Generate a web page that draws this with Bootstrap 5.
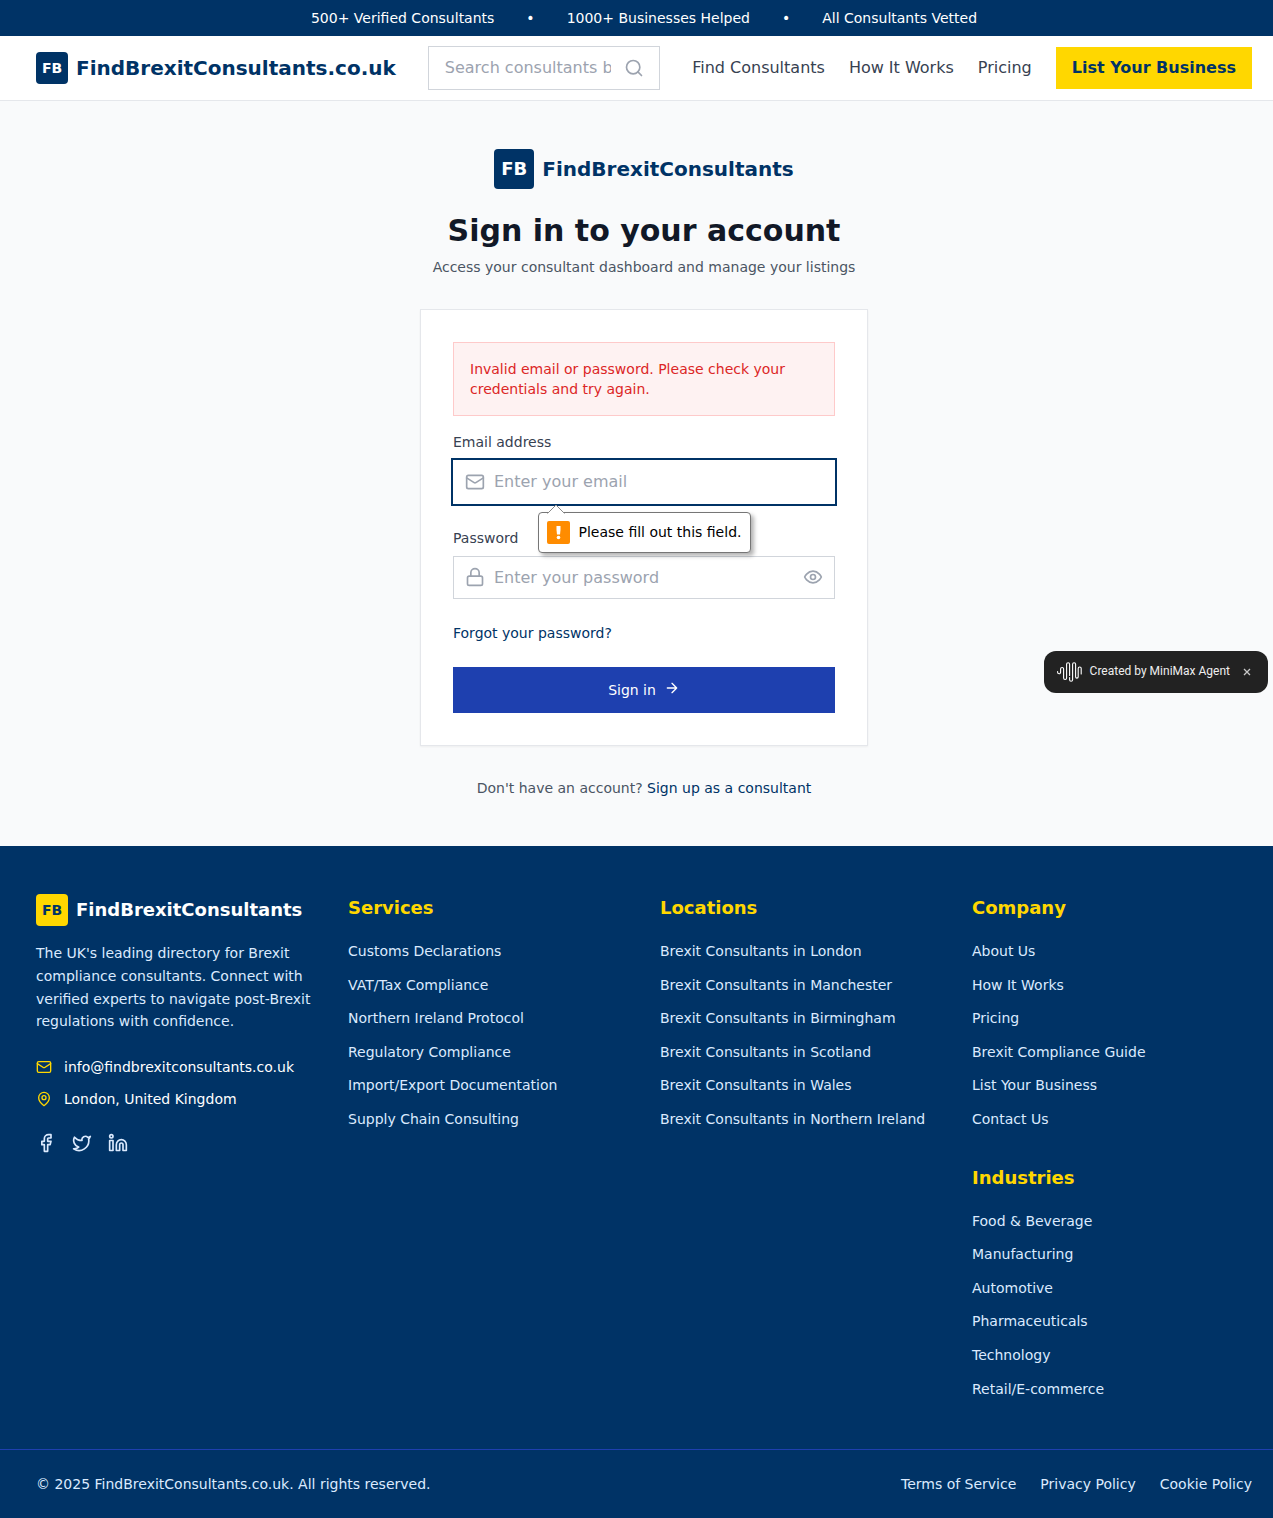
<!DOCTYPE html>
<html lang="en">
<head>
<meta charset="utf-8">
<meta name="viewport" content="width=device-width, initial-scale=1">
<title>Sign in - FindBrexitConsultants.co.uk</title>
<link href="https://cdn.jsdelivr.net/npm/bootstrap@5.3.0/dist/css/bootstrap.min.css" rel="stylesheet">
<style>
  :root { --navy: #003366; --gold: #ffd700; --grey: #9ca3af; }
  body { font-family: "DejaVu Sans", sans-serif; font-size: 16px; line-height: 1.6; color: #374151; background: #f9fafb; overflow-x: hidden; }
  a { text-decoration: none; color: inherit; }
  svg { display: block; flex: none; }
  .icon { fill: none; stroke: currentColor; stroke-width: 2; stroke-linecap: round; stroke-linejoin: round; }
  .shell { padding-left: 36px; padding-right: 21px; }
  .fs-14 { font-size: 14px; line-height: 20px; }
  .navy { color: var(--navy); }
  .slate { color: #4b5563; }
  .bg-navy { background: var(--navy); }
  .top-strip { height: 36px; gap: 32px; }
  .site-head { height: 65px; border-bottom: 1px solid #e5e7eb; }
  .fb-mark { width: 32px; height: 32px; border-radius: 4px; background: var(--navy); color: #fff; font-weight: 700; font-size: 14px; line-height: 20px; flex: none; }
  .fb-mark.big { width: 40px; height: 40px; font-size: 18px; }
  .fb-mark.gold { background: var(--gold); color: var(--navy); }
  .brand-text { font-size: 20px; line-height: 28px; font-weight: 700; }
  .brand-text.foot { font-size: 18px; }
  .field { border: 1px solid #d1d5db; background: #fff; height: 43.5px; }
  .field input { border: 0; outline: 0; background: transparent; min-width: 0; padding: 0; color: #111827; line-height: 24px; font-size: 16px; }
  .field input::placeholder { color: var(--grey); opacity: 1; }
  .field svg { color: var(--grey); }
  .field.active { border-color: transparent; box-shadow: 0 0 0 2px var(--navy); }
  .search { width: 232px; height: 44px; padding: 0 15px 0 16px; margin-left: 32px; margin-right: 32px; }
  .search input { width: 166px; margin-right: 13px; }
  .cta { background: var(--gold); color: var(--navy); font-weight: 700; padding: 8px 16px; }
  .main-area { padding-top: 48px; padding-bottom: 48px; }
  h1 { font-size: 30px; line-height: 36px; font-weight: 700; color: #111827; margin: 24px 0 8px; }
  .login { width: 448px; margin-top: 32px; padding: 32px; background: #fff; border: 1px solid #e5e7eb; box-shadow: 0 1px 2px rgba(0,0,0,.05); }
  .error-note { background: #fef2f2; border: 1px solid #fecaca; color: #dc2626; padding: 16px; margin-bottom: 16px; }
  .login label { display: block; margin-bottom: 8px; }
  .login .field { padding: 0 11px; }
  .login input { margin-left: 1px; }
  #password { padding-top: 1px; }
  .group { margin-bottom: 24px; }
  .submit { height: 46px; background: #1e40af; color: #fff; border: 0; border-radius: 0; margin-top: 24px; }
  .bubble { left: 84px; top: 51px; width: 213px; height: 41px; background: #fff; border: 1px solid #767676; border-radius: 4px; box-shadow: 3px 3px 4px rgba(0,0,0,.3); color: #000; padding: 0 8px; z-index: 3; }
  .bubble .tip { left: 8px; top: -9px; }
  .bubble span { padding-bottom: 2px; padding-left: .5px; }
  .site-foot { color: #dbeafe; padding-top: 48px; }
  .foot-grid { display: grid; grid-template-columns: repeat(4, 280px); gap: 32px; padding-bottom: 48px; }
  .foot-grid h2 { font-size: 18px; line-height: 28px; font-weight: 600; color: var(--gold); margin: 0 0 16px; }
  .foot-grid li { line-height: 25.6px; margin-bottom: 8px; }
  .foot-grid li a { font-size: 14px; line-height: 20px; }
  .foot-grid ul { margin-bottom: 32px; }
  .foot-grid ul:last-child { margin-bottom: -8px; }
  .about { font-size: 14px; line-height: 22.75px; margin: 16px 0 24px; }
  .gold-text { color: var(--gold); }
  .legal { border-top: 1px solid #1e40af; padding-top: 24px; padding-bottom: 23.8px; }
  .agent { position: fixed; left: 1044px; top: 651px; width: 224px; height: 42px; border-radius: 12px; background: #222; color: #eee; font: 12px/18px Roboto, sans-serif; padding: 0 17px 0 13px; z-index: 9; }
  .agent span { padding-bottom: 2px; margin-left: 7.6px; }
</style>
<script src="https://cdn.jsdelivr.net/npm/bootstrap@5.3.0/dist/js/bootstrap.bundle.min.js"></script>
</head>
<body>
<div class="bg-navy text-white shell top-strip fs-14 d-flex align-items-center justify-content-center">
  <span>500+ Verified Consultants</span><span>•</span><span>1000+ Businesses Helped</span><span>•</span><span>All Consultants Vetted</span>
</div>

<header class="site-head bg-white shell d-flex align-items-center">
  <a href="#" class="d-flex align-items-center gap-2 navy">
    <span class="fb-mark d-flex align-items-center justify-content-center">FB</span>
    <span class="brand-text">FindBrexitConsultants.co.uk</span>
  </a>
  <div class="field search d-flex align-items-center">
    <input type="text" placeholder="Search consultants by service or location...">
    <svg class="icon" width="20" height="20" viewBox="0 0 24 24"><circle cx="11" cy="11" r="8"/><path d="m21 21-4.3-4.3"/></svg>
  </div>
  <nav class="d-flex align-items-center gap-4 ms-auto text-nowrap">
    <a href="#">Find Consultants</a><a href="#">How It Works</a><a href="#">Pricing</a>
    <a href="#" class="cta">List Your Business</a>
  </nav>
</header>

<main class="main-area shell d-flex flex-column align-items-center">
  <a href="#" class="d-flex align-items-center gap-2 navy">
    <span class="fb-mark big d-flex align-items-center justify-content-center">FB</span>
    <span class="brand-text">FindBrexitConsultants</span>
  </a>
  <h1>Sign in to your account</h1>
  <p class="fs-14 mb-0 slate">Access your consultant dashboard and manage your listings</p>

  <form class="login" novalidate>
    <div class="error-note fs-14">Invalid email or password. Please check your credentials and try again.</div>
    <div class="group">
      <label class="fs-14" for="email">Email address</label>
      <div class="field active d-flex align-items-center gap-2 position-relative">
        <svg class="icon" width="20" height="20" viewBox="0 0 24 24"><rect width="20" height="16" x="2" y="4" rx="2"/><path d="m22 7-8.970 5.700a1.940 1.940 0 0 1-2.060 0L2 7"/></svg>
        <input id="email" class="flex-grow-1" type="email" placeholder="Enter your email">
        <div class="bubble position-absolute fs-14 d-flex align-items-center gap-2 text-nowrap" role="tooltip">
          <svg class="tip position-absolute" width="18" height="10" viewBox="0 0 18 10"><path d="M0.5 9.500 9 1l8.500 8.500V10H.5Z" fill="#fff"/><path d="M.5 9.500 9 1l8.500 8.500" fill="none" stroke="#8a8a8a"/></svg>
          <svg width="23" height="23" viewBox="0 0 23 23"><rect width="23" height="23" rx="2" fill="#ff8c00"/><path d="M9.500 5h4v4l-.5 4.500h-3L9.500 9Z" fill="#fff"/><circle cx="11.500" cy="16.500" r="1.800" fill="#fff"/></svg>
          <span>Please fill out this field.</span>
        </div>
      </div>
    </div>
    <div class="group">
      <label class="fs-14" for="password">Password</label>
      <div class="field d-flex align-items-center gap-2">
        <svg class="icon" width="20" height="20" viewBox="0 0 24 24"><rect width="18" height="11" x="3" y="11" rx="2"/><path d="M7 11V7a5 5 0 0 1 10 0v4"/></svg>
        <input id="password" class="flex-grow-1" type="password" placeholder="Enter your password">
        <svg class="icon" width="20" height="20" viewBox="0 0 24 24"><path d="M2 12s3-7 10-7 10 7 10 7-3 7-10 7-10-7-10-7Z"/><circle cx="12" cy="12" r="3"/></svg>
      </div>
    </div>
    <a href="#" class="fs-14 navy d-block">Forgot your password?</a>
    <button type="button" class="submit fs-14 w-100 d-flex align-items-center justify-content-center gap-2">
      <span>Sign in</span>
      <svg class="icon mb-1" width="16" height="16" viewBox="0 0 24 24"><path d="M5 12h14M12 5l7 7-7 7"/></svg>
    </button>
  </form>
  <p class="fs-14 mb-0 slate pt-2 mt-4">Don't have an account? <a href="#" class="navy">Sign up as a consultant</a></p>
</main>

<footer class="bg-navy site-foot">
  <div class="foot-grid shell">
    <div>
      <div class="d-flex align-items-center gap-2 text-white">
        <span class="fb-mark gold d-flex align-items-center justify-content-center">FB</span>
        <span class="brand-text foot">FindBrexitConsultants</span>
      </div>
      <p class="about">The UK's leading directory for Brexit compliance consultants. Connect with verified experts to navigate post-Brexit regulations with confidence.</p>
      <div class="d-flex align-items-center fs-14 text-white mb-2 pb-1">
        <svg class="icon gold-text me-2" width="16" height="16" viewBox="0 0 24 24"><rect width="20" height="16" x="2" y="4" rx="2"/><path d="m22 7-8.970 5.700a1.940 1.940 0 0 1-2.060 0L2 7"/></svg>
        <span class="ms-1">info@findbrexitconsultants.co.uk</span>
      </div>
      <div class="d-flex align-items-center fs-14 text-white mb-4">
        <svg class="icon gold-text me-2" width="16" height="16" viewBox="0 0 24 24"><path d="M20 10c0 6-8 12-8 12s-8-6-8-12a8 8 0 0 1 16 0Z"/><circle cx="12" cy="10" r="3"/></svg>
        <span class="ms-1">London, United Kingdom</span>
      </div>
      <div class="d-flex gap-3">
        <svg class="icon" width="20" height="20" viewBox="0 0 24 24"><path d="M18 2h-3a5 5 0 0 0-5 5v3H7v4h3v8h4v-8h3l1-4h-4V7a1 1 0 0 1 1-1h3z"/></svg>
        <svg class="icon" width="20" height="20" viewBox="0 0 24 24"><path d="M22 4s-.7 2.100-2 3.400c1.600 10-9.400 17.300-18 11.600 2.200.1 4.400-.6 6-2C3 15.500.5 9.600 3 5c2.200 2.600 5.600 4.100 9 4-.9-4.200 4-6.600 7-3.800 1.100 0 3-1.200 3-1.200z"/></svg>
        <svg class="icon" width="20" height="20" viewBox="0 0 24 24"><path d="M16 8a6 6 0 0 1 6 6v7h-4v-7a2 2 0 0 0-4 0v7h-4v-7a6 6 0 0 1 6-6z"/><rect width="4" height="12" x="2" y="9"/><circle cx="4" cy="4" r="2"/></svg>
      </div>
    </div>
    <div>
      <h2>Services</h2>
      <ul class="list-unstyled">
        <li><a href="#">Customs Declarations</a></li><li><a href="#">VAT/Tax Compliance</a></li><li><a href="#">Northern Ireland Protocol</a></li><li><a href="#">Regulatory Compliance</a></li><li><a href="#">Import/Export Documentation</a></li><li><a href="#">Supply Chain Consulting</a></li>
      </ul>
    </div>
    <div>
      <h2>Locations</h2>
      <ul class="list-unstyled">
        <li><a href="#">Brexit Consultants in London</a></li><li><a href="#">Brexit Consultants in Manchester</a></li><li><a href="#">Brexit Consultants in Birmingham</a></li><li><a href="#">Brexit Consultants in Scotland</a></li><li><a href="#">Brexit Consultants in Wales</a></li><li><a href="#">Brexit Consultants in Northern Ireland</a></li>
      </ul>
    </div>
    <div>
      <h2>Company</h2>
      <ul class="list-unstyled">
        <li><a href="#">About Us</a></li><li><a href="#">How It Works</a></li><li><a href="#">Pricing</a></li><li><a href="#">Brexit Compliance Guide</a></li><li><a href="#">List Your Business</a></li><li><a href="#">Contact Us</a></li>
      </ul>
      <h2>Industries</h2>
      <ul class="list-unstyled">
        <li><a href="#">Food &amp; Beverage</a></li><li><a href="#">Manufacturing</a></li><li><a href="#">Automotive</a></li><li><a href="#">Pharmaceuticals</a></li><li><a href="#">Technology</a></li><li><a href="#">Retail/E-commerce</a></li>
      </ul>
    </div>
  </div>
  <div class="legal shell fs-14 d-flex justify-content-between">
    <span>© 2025 FindBrexitConsultants.co.uk. All rights reserved.</span>
    <div class="d-flex gap-4"><a href="#">Terms of Service</a><a href="#">Privacy Policy</a><a href="#">Cookie Policy</a></div>
  </div>
</footer>

<div class="agent d-flex align-items-center">
  <svg width="25" height="20" viewBox="0 0 25 20" fill="none" stroke="#fff" stroke-width="1.100" stroke-linecap="round"><path d="M.6 9.500v.8a1.500 1.500 0 0 0 3 0V7a1.500 1.500 0 0 1 3 0v9a1.500 1.500 0 0 0 3 0V2.300a1.500 1.500 0 0 1 3 0v11.200M12.600 15.500v2.200a1.500 1.500 0 0 0 3 0V2.300a1.500 1.500 0 0 1 3 0v12.500a1.300 1.300 0 0 0 2.600 0V6.500a1.500 1.500 0 0 1 3 0v5.500"/></svg>
  <span class="text-nowrap">Created by MiniMax Agent</span>
  <svg class="ms-auto" width="8" height="8" viewBox="0 0 8 8" stroke="#c8c8c8" stroke-width="1.300"><path d="m1 1 6 6M7 1 1 7"/></svg>
</div>
</body>
</html>
